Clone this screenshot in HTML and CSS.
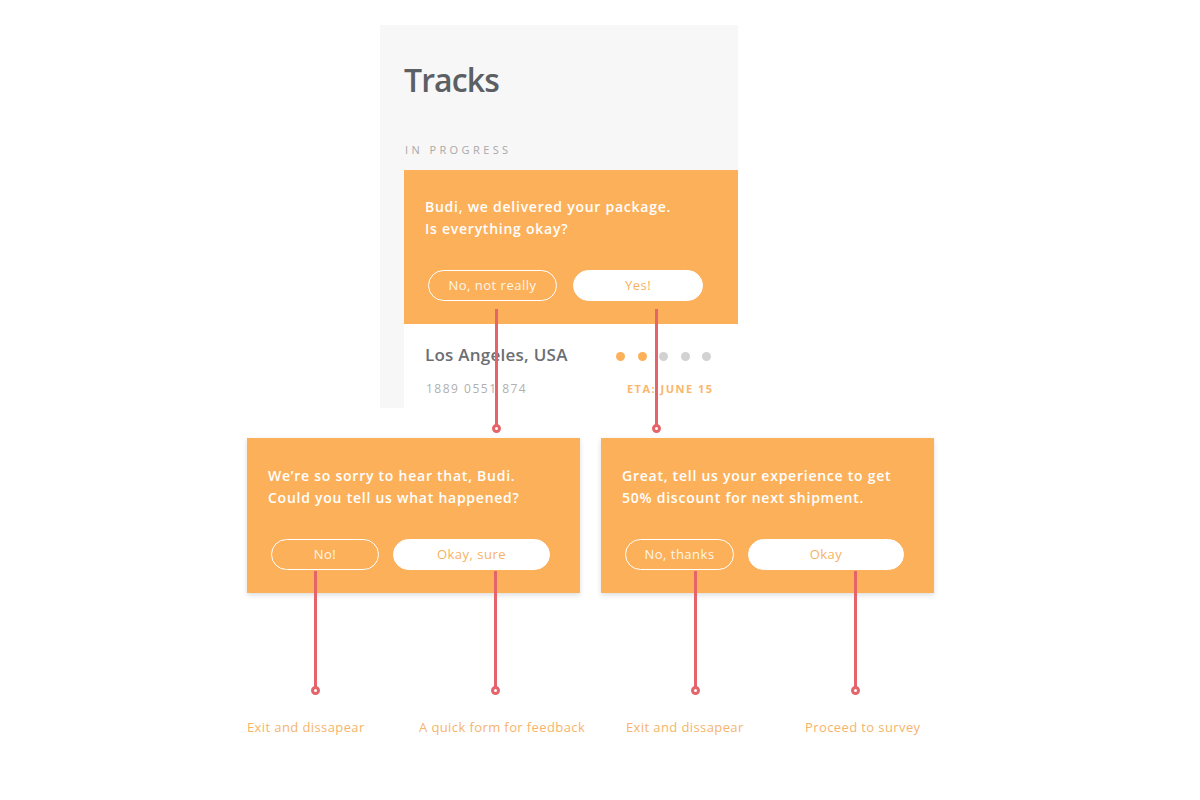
FILE: index.html
```html
<!DOCTYPE html>
<html lang="en">
<head>
<meta charset="utf-8">
<title>Tracks – delivery feedback flow</title>
<link rel="stylesheet" href="styles.css">
</head>
<body>
<div class="stage">
  <section class="phone">
    <h1 class="title">Tracks</h1>
    <div class="section-label">IN PROGRESS</div>
    <div class="track">
      <div class="prompt prompt-main">
        <p class="prompt-text">Budi, we delivered your package.<br>Is everything okay?</p>
        <div class="actions actions-main">
          <button class="btn btn-outline">No, not really</button>
          <button class="btn btn-solid">Yes!</button>
        </div>
      </div>
      <div class="track-info">
        <div class="info-row">
          <span class="city">Los Angeles, USA</span>
          <div class="dots">
            <span class="dot on"></span>
            <span class="dot on"></span>
            <span class="dot"></span>
            <span class="dot"></span>
            <span class="dot"></span>
          </div>
        </div>
        <div class="info-row info-row-sub">
          <span class="code">1889 0551 874</span>
          <span class="eta">ETA: JUNE 15</span>
        </div>
      </div>
    </div>
  </section>

  <div class="followups">
    <div class="prompt card">
      <p class="prompt-text">We’re so sorry to hear that, Budi.<br>Could you tell us what happened?</p>
      <div class="actions actions-card">
        <button class="btn btn-outline b-no">No!</button>
        <button class="btn btn-solid b-sure">Okay, sure</button>
      </div>
    </div>
    <div class="prompt card">
      <p class="prompt-text">Great, tell us your experience to get<br>50% discount for next shipment.</p>
      <div class="actions actions-card">
        <button class="btn btn-outline b-thanks">No, thanks</button>
        <button class="btn btn-solid b-okay">Okay</button>
      </div>
    </div>
  </div>

  <div class="labels">
    <span class="label">Exit and dissapear</span>
    <span class="label">A quick form for feedback</span>
    <span class="label">Exit and dissapear</span>
    <span class="label">Proceed to survey</span>
  </div>

  <span class="wire wire-top wire-a"></span>
  <span class="wire wire-top wire-b"></span>
  <span class="wire wire-bottom wire-c"></span>
  <span class="wire wire-bottom wire-d"></span>
  <span class="wire wire-bottom wire-e"></span>
  <span class="wire wire-bottom wire-f"></span>
</div>
</body>
</html>
```

FILE: styles.css
```css
*, *::before, *::after {
  box-sizing: border-box;
}

html, body {
  margin: 0;
  padding: 0;
  background: #ffffff;
}

body {
  font-family: "Open Sans", "Noto Sans", sans-serif;
  color: #5b5e62;
  width: 1200px;
  height: 800px;
  overflow: hidden;
}

.stage {
  position: relative;
  width: 1200px;
  height: 800px;
  padding-top: 25px;
}

/* ---------- phone panel ---------- */
.phone {
  margin-left: 380px;
  width: 358px;
  background: #f7f7f7;
  padding: 35px 0 0 24px;
}

.title {
  margin: 0;
  font-size: 32px;
  line-height: 40px;
  font-weight: 600;
  letter-spacing: -0.9px;
  color: #5c5f63;
}

.section-label {
  margin-top: 42px;
  font-size: 11px;
  line-height: 16px;
  letter-spacing: 3.4px;
  color: #a9a9a9;
  padding-left: 1px;
}

.track {
  margin-top: 12px;
  background: #ffffff;
}

/* ---------- orange prompts ---------- */
.prompt {
  background: #fdb05a;
  color: #ffffff;
  padding: 26px 21px 23px;
}

.prompt-text {
  margin: 0;
  font-size: 14px;
  line-height: 22px;
  font-weight: 600;
  letter-spacing: 0.75px;
}

.actions {
  display: flex;
  margin-top: 30px;
  margin-left: 3px;
}

.actions-main {
  gap: 16px;
}

.actions-card {
  gap: 14px;
}

.btn {
  height: 31px;
  border-radius: 16px;
  border: 1px solid #ffffff;
  font-family: "Open Sans", "Noto Sans", sans-serif;
  font-size: 13px;
  line-height: 29px;
  letter-spacing: 0.5px;
  padding: 0;
  text-align: center;
  cursor: pointer;
}

.btn-outline {
  background: transparent;
  color: #fff6ea;
}

.btn-solid {
  background: #ffffff;
  color: #f9b163;
}

.actions-main .btn-outline { width: 129px; }
.actions-main .btn-solid { width: 130px; }
.b-no { width: 108px; }
.b-sure { width: 157px; }
.b-thanks { width: 109px; }
.b-okay { width: 156px; }

/* ---------- track info ---------- */
.track-info {
  padding: 19px 26px 11px 21px;
}

.info-row {
  display: flex;
  align-items: center;
  justify-content: space-between;
  height: 24px;
}

.city {
  font-size: 17px;
  line-height: 24px;
  font-weight: 600;
  letter-spacing: 0.25px;
  color: #6b6e73;
}

.dots {
  display: flex;
  gap: 12.4px;
  margin-right: 1px;
  margin-top: 2px;
}

.dot {
  width: 9px;
  height: 9px;
  border-radius: 50%;
  background: #d2d2d2;
}

.dot.on {
  background: #fdb05a;
}

.info-row-sub {
  margin-top: 14px;
  height: 16px;
  align-items: baseline;
}

.code {
  font-size: 12px;
  line-height: 16px;
  letter-spacing: 1.5px;
  color: #b0b0b0;
  padding-left: 1px;
}

.eta {
  font-size: 11px;
  line-height: 16px;
  font-weight: 700;
  letter-spacing: 1.5px;
  color: #fbb66b;
  margin-right: -1.5px;
}

/* ---------- follow-up cards ---------- */
.followups {
  display: flex;
  gap: 21px;
  margin-top: 30px;
  margin-left: 247px;
}

.card {
  width: 333px;
  padding-top: 27px;
  box-shadow: 0 2px 5px rgba(0, 0, 0, 0.14);
}

/* ---------- outcome labels ---------- */
.labels {
  display: grid;
  grid-template-columns: 172px 207px 179px auto;
  margin-top: 125px;
  margin-left: 247px;
}

.label {
  font-size: 13px;
  line-height: 18px;
  letter-spacing: 0.4px;
  color: #f6b46b;
  white-space: nowrap;
}

/* ---------- connector annotations ---------- */
.wire {
  position: absolute;
  width: 3px;
  background: #e5646a;
}

.wire::after {
  content: "";
  position: absolute;
  left: -3px;
  bottom: -4.5px;
  width: 9px;
  height: 9px;
  border: 3px solid #e5646a;
  border-radius: 50%;
  background: #ffffff;
}

.wire-top {
  top: 309px;
  height: 119px;
}

.wire-bottom {
  top: 571px;
  height: 119px;
}

.wire-a { left: 494.5px; }
.wire-b { left: 654.5px; }
.wire-c { left: 314px; }
.wire-d { left: 494px; }
.wire-e { left: 694px; }
.wire-f { left: 854px; }
```
